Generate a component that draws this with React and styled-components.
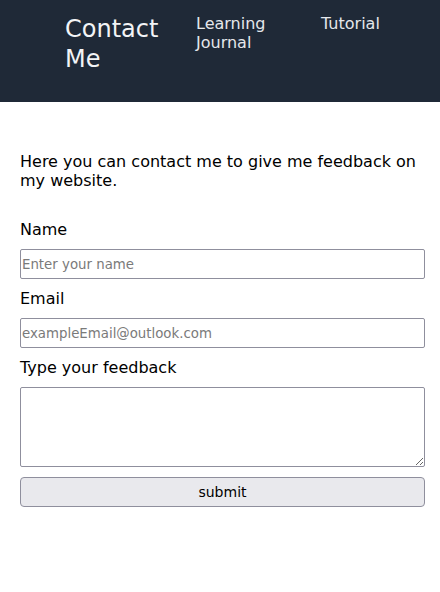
import React from "react";
import styled, { createGlobalStyle } from "styled-components";

const GlobalStyle = createGlobalStyle`
  body {
    margin: 0;
    font-family: "DejaVu Sans", sans-serif;
    background: #ffffff;
    color: #000000;
  }
`;

const App = () => {
  return (
    <>
      <GlobalStyle />
      <Header>
        <Title>Contact Me</Title>
        <NavItem>Learning Journal</NavItem>
        <NavItem>Tutorial</NavItem>
      </Header>
      <Main>
        <Intro>Here you can contact me to give me feedback on my website.</Intro>
        <Form onSubmit={(e) => e.preventDefault()}>
          <Label htmlFor="name">Name</Label>
          <Input id="name" type="text" placeholder="Enter your name" />
          <Label htmlFor="email">Email</Label>
          <Input id="email" type="email" placeholder="exampleEmail@outlook.com" />
          <Label htmlFor="feedback">Type your feedback</Label>
          <Feedback id="feedback" />
          <Submit type="submit">submit</Submit>
        </Form>
      </Main>
    </>
  );
};

const Header = styled.header`
  display: flex;
  align-items: flex-start;
  height: 102px;
  box-sizing: border-box;
  padding: 14px 0 0 65px;
  background: #1f2937;
  color: #f3f4f6;
`;

const Title = styled.h1`
  flex: 0 0 131px;
  margin: 0;
  font-size: 24px;
  font-weight: normal;
  line-height: 30px;
`;

const NavItem = styled.a`
  flex: 0 0 125px;
  padding-right: 15px;
  box-sizing: border-box;
  font-size: 16px;
  line-height: 19px;
  color: #e5e7eb;
  cursor: pointer;
`;

const Main = styled.main`
  padding: 50px 0 0 20px;
`;

const Intro = styled.p`
  margin: 0 0 30px;
  width: 400px;
  font-size: 16px;
  line-height: 19px;
`;

const Form = styled.form`
  display: flex;
  flex-direction: column;
  width: 405px;
`;

const Label = styled.label`
  font-size: 16px;
  line-height: 19px;
  margin-bottom: 10px;
`;

const Input = styled.input`
  box-sizing: border-box;
  height: 30px;
  margin: 0 0 10px;
  padding: 1px 1px;
  border: 1px solid #8f8f9d;
  border-radius: 2px;
  font-family: "DejaVu Sans", sans-serif;
  font-size: 13.33px;

  &::placeholder {
    color: #7a7a7a;
  }
`;

const Feedback = styled.textarea`
  box-sizing: border-box;
  height: 80px;
  margin: 0 0 10px;
  border: 1px solid #8f8f9d;
  border-radius: 2px;
  font-family: "DejaVu Sans", sans-serif;
`;

const Submit = styled.button`
  box-sizing: border-box;
  height: 30px;
  border: 1px solid #8f8f9d;
  border-radius: 4px;
  background: #e9e9ed;
  font-family: "DejaVu Sans", sans-serif;
  font-size: 14px;
  color: #000000;
`;

export default App;
